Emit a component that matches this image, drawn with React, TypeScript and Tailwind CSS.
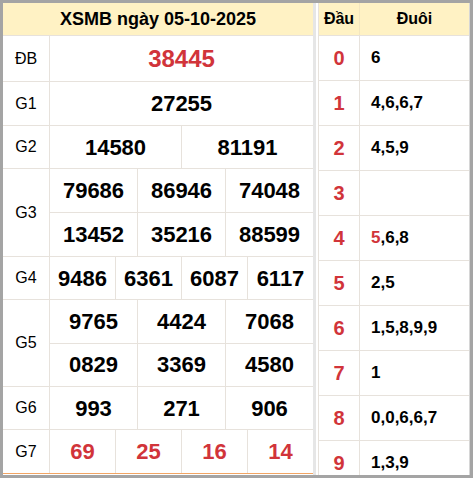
import React from "react";

const RED = "text-[#d1343a]";

function Cells({ items, red = false, size = "text-[22px]" }: { items: string[]; red?: boolean; size?: string }) {
  return (
    <div className="flex flex-1 min-h-0">
      {items.map((n, i) => (
        <div
          key={i}
          className={
            "flex-1 basis-0 flex items-center justify-center font-bold " +
            size +
            " " +
            (red ? RED : "text-black") +
            (i < items.length - 1 ? " border-r border-[#e7e2dc]" : "")
          }
        >
          {n}
        </div>
      ))}
    </div>
  );
}

function Row({ label, h, rows, red = false, size, last = false }: { label: string; h: string; rows: string[][]; red?: boolean; size?: string; last?: boolean }) {
  return (
    <div className={"flex shrink-0 " + h + (last ? " border-b border-[#f2a564]" : " border-b border-[#e7e2dc]")}>
      <div className="w-[47px] shrink-0 border-r border-[#e7e2dc] flex items-center justify-center text-[16px] text-black">
        {label}
      </div>
      <div className="flex-1 flex flex-col">
        {rows.map((r, i) => (
          <div key={i} className={"flex flex-1 " + (i < rows.length - 1 ? "border-b border-[#e7e2dc]" : "")}>
            <Cells items={r} red={red} size={size} />
          </div>
        ))}
      </div>
    </div>
  );
}

const loto: [string, React.ReactNode][] = [
  ["0", "6"],
  ["1", "4,6,6,7"],
  ["2", "4,5,9"],
  ["3", ""],
  ["4", (<><span className={RED}>5</span>,6,8</>)],
  ["5", "2,5"],
  ["6", "1,5,8,9,9"],
  ["7", "1"],
  ["8", "0,0,6,6,7"],
  ["9", "1,3,9"],
];

export default function App() {
  return (
    <div className="w-[473px] h-[478px] border-[3px] border-[#a4a4a4] bg-white flex overflow-hidden font-['Liberation_Sans',Arial,sans-serif]">
      <div className="w-[313px] shrink-0 border-r-[3px] border-[#e6e6e6] flex flex-col">
        <div className="h-[33px] shrink-0 bg-[#fff2c4] border-b border-[#e7e2dc] flex items-center justify-center text-[18px] font-bold text-black">
          XSMB ngày 05-10-2025
        </div>
        <Row label="ĐB" h="h-[46px]" rows={[["38445"]]} red size="text-[24px]" />
        <Row label="G1" h="h-[44px]" rows={[["27255"]]} />
        <Row label="G2" h="h-[43px]" rows={[["14580", "81191"]]} />
        <Row label="G3" h="h-[88px]" rows={[["79686", "86946", "74048"], ["13452", "35216", "88599"]]} />
        <Row label="G4" h="h-[43px]" rows={[["9486", "6361", "6087", "6117"]]} />
        <Row label="G5" h="h-[87px]" rows={[["9765", "4424", "7068"], ["0829", "3369", "4580"]]} />
        <Row label="G6" h="h-[43px]" rows={[["993", "271", "906"]]} />
        <Row label="G7" h="h-[44px]" rows={[["69", "25", "16", "14"]]} red last />
      </div>
      <div className="ml-[2px] w-[152px] shrink-0 border-l border-r border-l-[#e7e2dc] border-r-[#d6d6d6] flex flex-col">
        <div className="h-[33px] shrink-0 flex bg-[#fff2c4] border-b border-[#e7e2dc] text-[16px] font-bold text-black">
          <div className="w-[41px] shrink-0 border-r border-[#f3e6c0] flex items-center justify-center">Đầu</div>
          <div className="flex-1 flex items-center justify-center">Đuôi</div>
        </div>
        {loto.map(([d, t]) => (
          <div key={d} className="h-[45px] shrink-0 flex border-b border-[#e7e2dc]">
            <div className={"w-[41px] shrink-0 border-r border-[#e7e2dc] flex items-center justify-center text-[20px] font-bold " + RED}>
              {d}
            </div>
            <div className="flex-1 flex items-center pl-[11px] text-[17px] font-bold text-black">{t}</div>
          </div>
        ))}
      </div>
    </div>
  );
}
